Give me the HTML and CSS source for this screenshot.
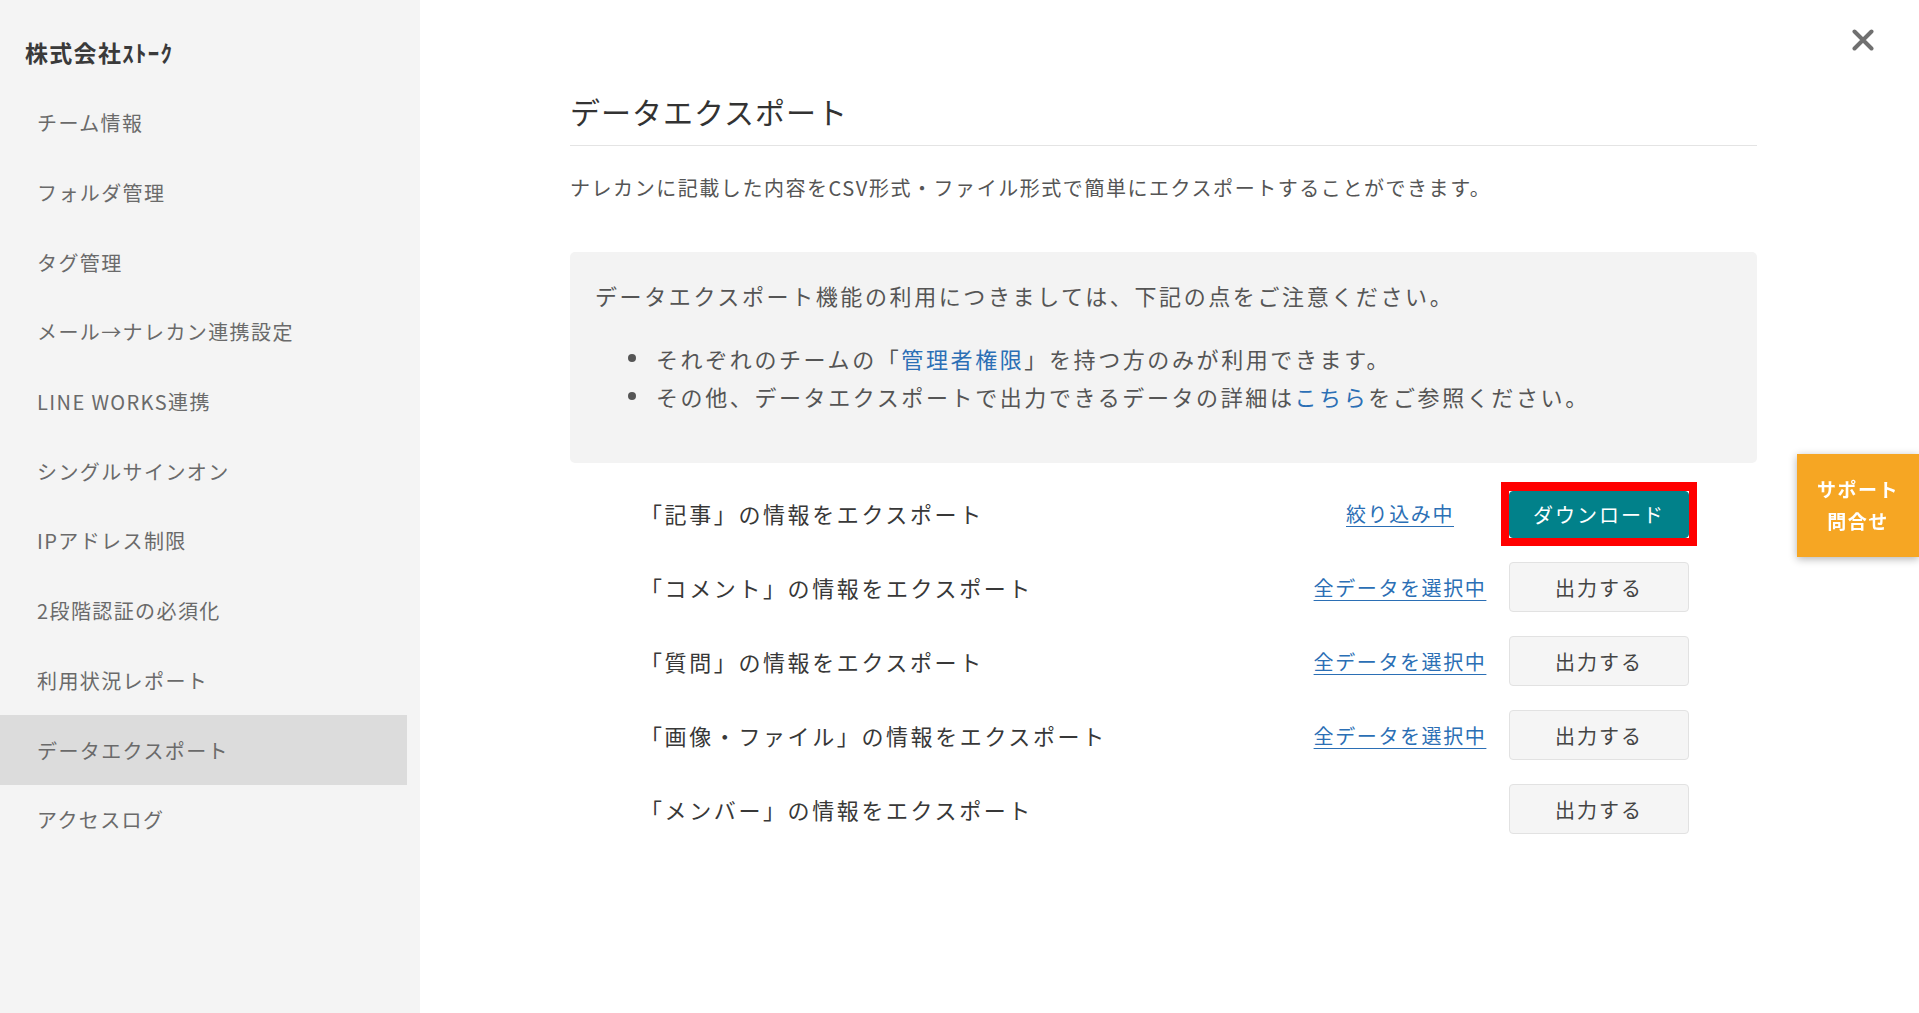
FILE: index.html
```html
<!DOCTYPE html>
<html lang="ja">
<head>
<meta charset="utf-8">
<title>データエクスポート</title>
<link rel="stylesheet" href="styles.css">
</head>
<body>
<div class="layout">
  <aside class="sidebar">
    <div class="company">株式会社ｽﾄｰｸ</div>
    <nav class="nav">
      <a class="nav-item">チーム情報</a>
      <a class="nav-item">フォルダ管理</a>
      <a class="nav-item">タグ管理</a>
      <a class="nav-item">メール→ナレカン連携設定</a>
      <a class="nav-item">LINE WORKS連携</a>
      <a class="nav-item">シングルサインオン</a>
      <a class="nav-item">IPアドレス制限</a>
      <a class="nav-item">2段階認証の必須化</a>
      <a class="nav-item">利用状況レポート</a>
      <a class="nav-item active">データエクスポート</a>
      <a class="nav-item">アクセスログ</a>
    </nav>
  </aside>
  <main class="main">
    <div class="content">
      <h1 class="title">データエクスポート</h1>
      <p class="desc">ナレカンに記載した内容をCSV形式・ファイル形式で簡単にエクスポートすることができます。</p>
      <div class="notice">
        <p class="notice-title">データエクスポート機能の利用につきましては、下記の点をご注意ください。</p>
        <ul class="notice-list">
          <li>それぞれのチームの「<a class="inline-link">管理者権限</a>」を持つ方のみが利用できます。</li>
          <li>その他、データエクスポートで出力できるデータの詳細は<a class="inline-link">こちら</a>をご参照ください。</li>
        </ul>
      </div>
      <div class="rows">
        <div class="row">
          <span class="row-label">「記事」の情報をエクスポート</span>
          <span class="row-link"><a class="link">絞り込み中</a></span>
          <span class="row-action highlight"><button class="btn btn-primary">ダウンロード</button></span>
        </div>
        <div class="row">
          <span class="row-label">「コメント」の情報をエクスポート</span>
          <span class="row-link"><a class="link">全データを選択中</a></span>
          <span class="row-action"><button class="btn">出力する</button></span>
        </div>
        <div class="row">
          <span class="row-label">「質問」の情報をエクスポート</span>
          <span class="row-link"><a class="link">全データを選択中</a></span>
          <span class="row-action"><button class="btn">出力する</button></span>
        </div>
        <div class="row">
          <span class="row-label">「画像・ファイル」の情報をエクスポート</span>
          <span class="row-link"><a class="link">全データを選択中</a></span>
          <span class="row-action"><button class="btn">出力する</button></span>
        </div>
        <div class="row">
          <span class="row-label">「メンバー」の情報をエクスポート</span>
          <span class="row-link"></span>
          <span class="row-action"><button class="btn">出力する</button></span>
        </div>
      </div>
    </div>
    <button class="close" aria-label="閉じる">
      <svg width="22" height="22" viewBox="0 0 22 22"><path d="M2.5 2.5 L19.5 19.5 M19.5 2.5 L2.5 19.5" stroke="#707070" stroke-width="4" stroke-linecap="round" fill="none"/></svg>
    </button>
  </main>
</div>
<div class="support">サポート<br>問合せ</div>
</body>
</html>
```

FILE: styles.css
```css
* { box-sizing: border-box; }
html, body { margin: 0; padding: 0; }
body {
  font-family: "Noto Sans CJK JP", "Noto Sans", sans-serif;
  background: #ffffff;
  color: #333;
  width: 1919px;
  height: 1013px;
  overflow: hidden;
}
.layout {
  display: flex;
  height: 1013px;
}
.sidebar {
  width: 420px;
  flex: 0 0 420px;
  background: #f4f4f4;
  padding-top: 37px;
}
.company {
  padding-left: 25px;
  font-size: 23px;
  line-height: 30px;
  font-weight: 700;
  letter-spacing: 1.3px;
  color: #3a3a3a;
}
.nav {
  margin-top: 21px;
  display: flex;
  flex-direction: column;
  width: 407px;
}
.nav-item {
  height: 69.7px;
  display: flex;
  align-items: center;
  padding-left: 37px;
  font-size: 20px;
  letter-spacing: 1.4px;
  color: #6a6a6a;
}
.nav-item.active {
  background: #dcdcdc;
}
.main {
  position: relative;
  flex: 1;
  padding-left: 150px;
}
.content {
  width: 1187px;
  padding-top: 91px;
}
.title {
  margin: 0;
  font-size: 30px;
  line-height: 40px;
  font-weight: 400;
  letter-spacing: 1px;
  color: #333;
  padding-bottom: 14px;
  border-bottom: 1px solid #e4e4e4;
}
.desc {
  margin: 27px 0 0;
  font-size: 20px;
  line-height: 30px;
  letter-spacing: 1.55px;
  color: #555;
}
.notice {
  margin-top: 49px;
  background: #f3f3f3;
  border-radius: 5px;
  padding: 26px 25px 48px;
  color: #555;
}
.notice-title {
  margin: 0;
  font-size: 22px;
  line-height: 34px;
  letter-spacing: 2.6px;
}
.notice-list {
  list-style: none;
  margin: 27px 0 0;
  padding: 0 0 0 61px;
  font-size: 22px;
  line-height: 38px;
  letter-spacing: 2.6px;
}
.notice-list li {
  position: relative;
}
.notice-list li::before {
  content: "";
  position: absolute;
  left: -28px;
  top: 15px;
  width: 8px;
  height: 8px;
  border-radius: 50%;
  background: #555;
}
.inline-link {
  color: #2b6fb5;
}
.rows {
  margin-top: 25px;
  display: flex;
  flex-direction: column;
  gap: 24px;
  padding: 0 68px 0 70px;
}
.row {
  display: flex;
  align-items: center;
  height: 50px;
}
.row-label {
  flex: 1;
  font-size: 22px;
  letter-spacing: 2.6px;
  color: #383838;
}
.row-link {
  width: 200px;
  text-align: center;
  margin-right: 9px;
}
.link {
  font-size: 20px;
  letter-spacing: 1.6px;
  color: #2b6fb5;
  text-decoration: underline;
  text-underline-offset: 4px;
  text-decoration-thickness: 1px;
}
.row-action {
  width: 180px;
  display: flex;
}
.row-action.highlight {
  position: relative;
  align-self: flex-end;
}
.row-action.highlight::after {
  content: "";
  position: absolute;
  left: -8px;
  right: -8px;
  top: -9px;
  bottom: -8px;
  border: 8px solid #ff0000;
  border-top-width: 9px;
  pointer-events: none;
}
.btn {
  width: 180px;
  height: 50px;
  border: 1px solid #e2e2e2;
  border-radius: 4px;
  background: #f5f5f5;
  font-family: inherit;
  font-size: 20px;
  letter-spacing: 2px;
  color: #444;
  padding: 0;
}
.btn-primary {
  height: 47px;
  background: #01818a;
  border-color: #01818a;
  color: #fff;
}
.close {
  position: absolute;
  top: 29px;
  right: 45px;
  width: 22px;
  height: 22px;
  padding: 0;
  border: 0;
  background: transparent;
  display: flex;
}
.support {
  position: fixed;
  right: 0;
  top: 454px;
  width: 122px;
  height: 103px;
  background: #f6a623;
  color: #fff;
  font-size: 19px;
  font-weight: 700;
  letter-spacing: 1.5px;
  line-height: 32px;
  text-align: center;
  padding-top: 19px;
  box-shadow: 0 2px 8px rgba(0,0,0,0.3);
}
```
